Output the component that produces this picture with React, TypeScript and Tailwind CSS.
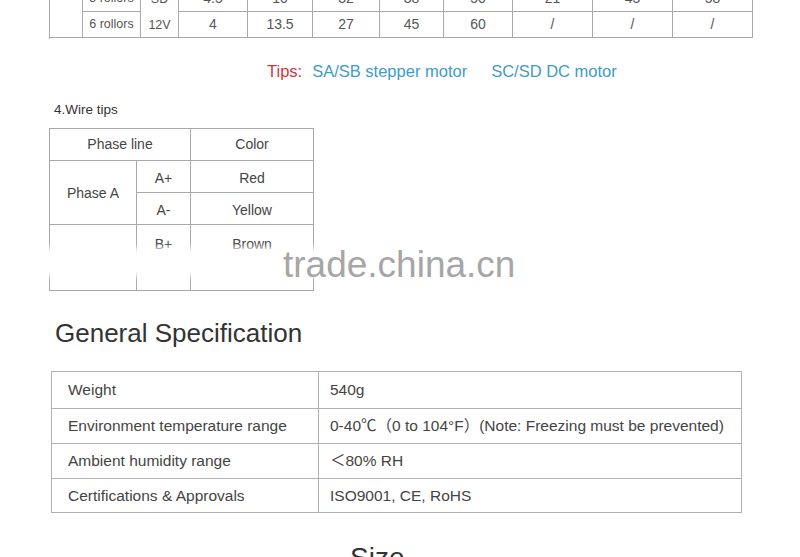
import React from 'react';

const font = "font-['Liberation_Sans','Noto_Sans_CJK_SC',sans-serif]";

const topRowA = ['4.5', '10', '32', '38', '50', '21', '45', '58'];
const topRowB = ['4', '13.5', '27', '45', '60', '/', '/', '/'];

const specs = [
  { label: 'Weight', value: '540g', h: 'h-[37px]' },
  { label: 'Environment temperature range', value: '0-40℃（0 to 104°F）(Note: Freezing must be prevented)', h: 'h-[35px]' },
  { label: 'Ambient humidity range', value: '＜80% RH', h: 'h-[35px]' },
  { label: 'Certifications & Approvals', value: 'ISO9001, CE, RoHS', h: 'h-[34px]' },
];

const cell = 'flex items-center justify-center border-r border-b border-[#a9a9a9]';

const App: React.FC = () => {
  return (
    <div className={`relative w-[800px] h-[557px] overflow-hidden bg-white ${font}`}>
      {/* tail of the motor parameter table */}
      <div className="ml-[49px] w-[704px] h-[39px] overflow-hidden border-l border-[#a9a9a9]">
        <div className="-mt-[14px] grid grid-cols-[33px_58px_38px_69px_65px_67px_64px_69px_80px_80px_80px] grid-rows-[26px_26px] text-[#555]">
          <div className={`${cell} row-span-2`} />
          <div className={`${cell} text-[12.5px]`}>5 rollors</div>
          <div className={`${cell} row-span-2 text-[12.5px] leading-[26px] text-center`}>
            SD
            <br />
            12V
          </div>
          {topRowA.map((v, i) => (
            <div key={'a' + i} className={`${cell} text-[14px]`}>{v}</div>
          ))}
          <div className={`${cell} text-[12.5px]`}>6 rollors</div>
          {topRowB.map((v, i) => (
            <div key={'b' + i} className={`${cell} text-[14px]`}>{v}</div>
          ))}
        </div>
      </div>

      <div className="mt-[22px] ml-[267px] flex items-center gap-[10px] text-[16.5px] leading-[20px]">
        <span className="text-[#d8343c]">Tips:</span>
        <span className="text-[#3d9cc8]">SA/SB stepper motor</span>
        <span className="ml-[14px] text-[#3d9cc8]">SC/SD DC motor</span>
      </div>

      <div className="mt-[21px] ml-[54px] text-[13.5px] leading-[16px] text-[#333]">4.Wire tips</div>

      {/* wire table */}
      <div className="mt-[10px] ml-[49px] w-[265px] grid grid-cols-[87px_54px_123px] grid-rows-[32px_32px_32px_32px_34px] border-l border-t border-[#a9a9a9] text-[14px] text-[#444]">
        <div className={`${cell} col-span-2`}>Phase line</div>
        <div className={cell}>Color</div>
        <div className={`${cell} row-span-2 pt-[1px]`}>Phase A</div>
        <div className={`${cell} pt-[4px]`}>A+</div>
        <div className={`${cell} pt-[4px]`}>Red</div>
        <div className={`${cell} pt-[4px]`}>A-</div>
        <div className={`${cell} pt-[4px]`}>Yellow</div>
        <div className={`${cell} row-span-2`} />
        <div className={`${cell} items-start pt-[9px]`}>B+</div>
        <div className={`${cell} items-start pt-[9px]`}>Brown</div>
        <div className={cell} />
        <div className={cell} />
      </div>

      {/* watermark */}
      <div className="absolute left-[28px] top-[248px] w-[490px] h-[28px] bg-white blur-[3px]" />
      <div className="absolute left-[283px] top-[246px] text-[37px] leading-[37px] text-[#a6a6a6]">trade.china.cn</div>

      <div className="mt-[27px] ml-[55px] text-[26px] leading-[30px] text-[#333]">General Specification</div>

      {/* spec table */}
      <div className="mt-[23px] ml-[51px] w-[691px] border-l border-t border-[#b0b0b0] text-[15.5px] text-[#444]">
        {specs.map((s) => (
          <div key={s.label} className={`grid grid-cols-[267px_1fr] ${s.h}`}>
            <div className="flex items-center pl-[16px] border-r border-b border-[#b0b0b0]">{s.label}</div>
            <div className="flex items-center pl-[11px] border-r border-b border-[#b0b0b0]">{s.value}</div>
          </div>
        ))}
      </div>

      <div className="mt-[31px] ml-[350px] text-[28px] leading-[28px] text-[#333]">Size</div>
    </div>
  );
};

export default App;
